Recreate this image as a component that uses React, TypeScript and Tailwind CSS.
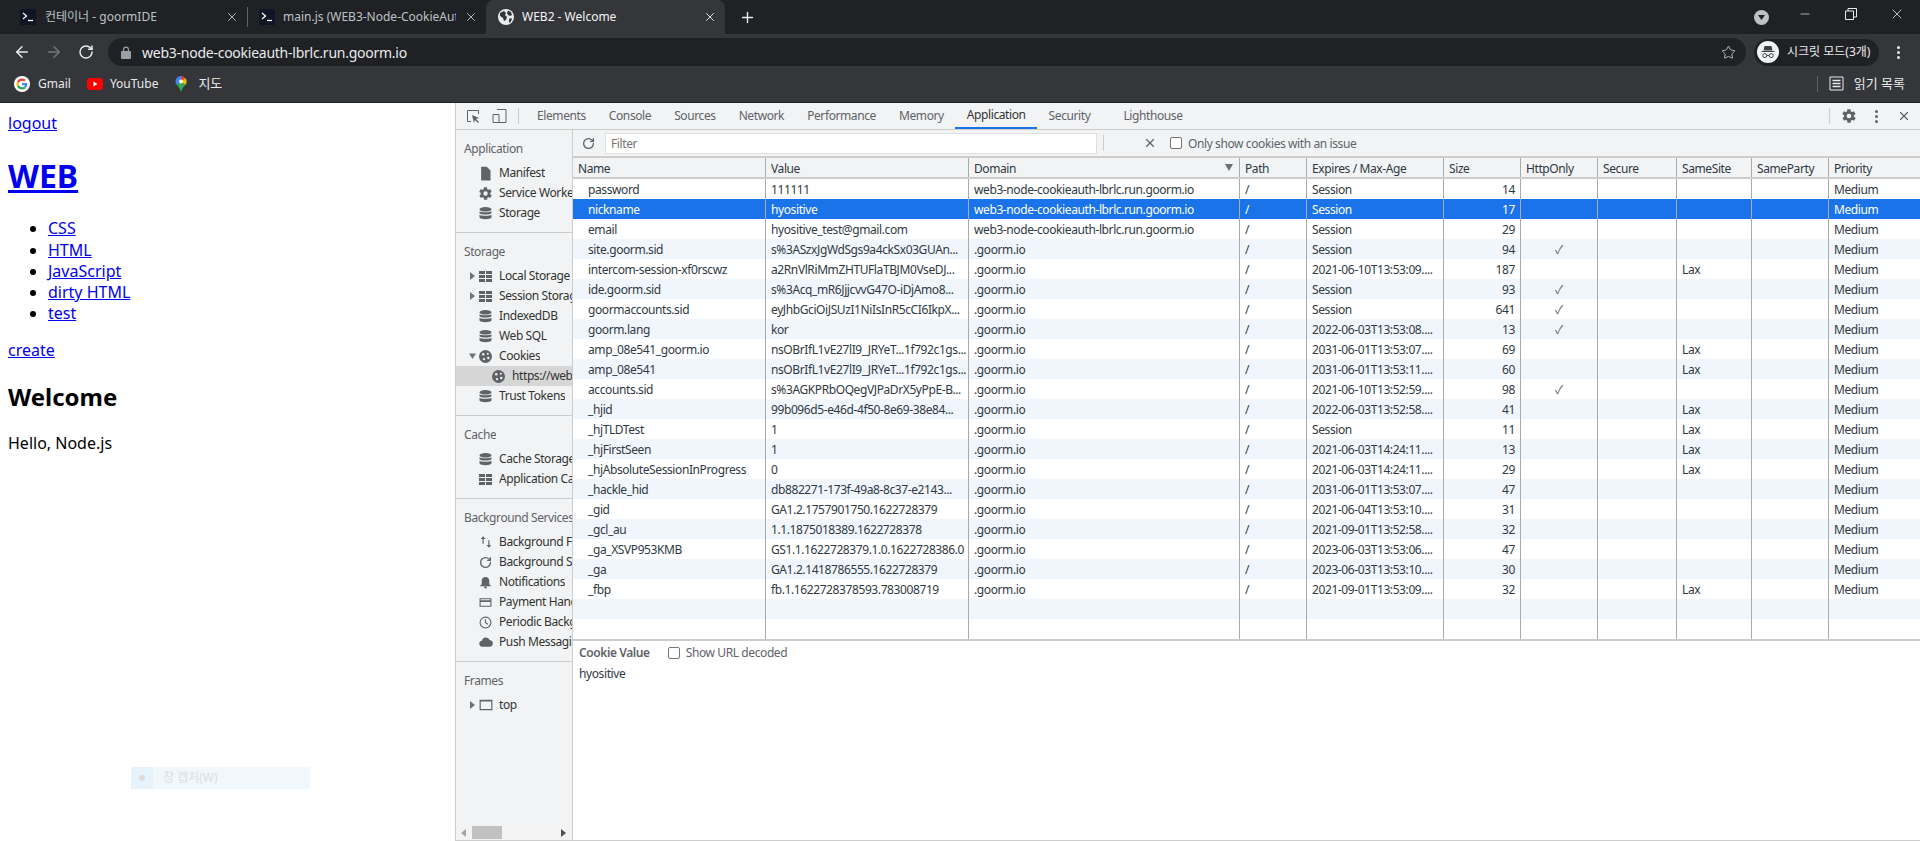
import { ArrowLeft, ArrowRight, Minus, Plus, RotateCw, Star, X } from 'lucide-react';

const ui = 'font-["Noto_Sans","Noto_Sans_CJK_KR",sans-serif]';

const columns = [
  { label: 'Name', width: 'w-[193px]' },
  { label: 'Value', width: 'w-[203px]' },
  { label: 'Domain', width: 'w-[271px]' },
  { label: 'Path', width: 'w-[67px]' },
  { label: 'Expires / Max-Age', width: 'w-[137px]' },
  { label: 'Size', width: 'w-[77px]' },
  { label: 'HttpOnly', width: 'w-[77px]' },
  { label: 'Secure', width: 'w-[79px]' },
  { label: 'SameSite', width: 'w-[75px]' },
  { label: 'SameParty', width: 'w-[77px]' },
  { label: 'Priority', width: 'flex-1' },
];

const hostDomain = 'web3-node-cookieauth-lbrlc.run.goorm.io';

const cookies = [
  ['password', '111111', hostDomain, 'Session', '14', '', ''],
  ['nickname', 'hyositive', hostDomain, 'Session', '17', '', ''],
  ['email', 'hyositive_test@gmail.com', hostDomain, 'Session', '29', '', ''],
  ['site.goorm.sid', 's%3ASzxJgWdSgs9a4ckSx03GUAn...', '.goorm.io', 'Session', '94', '✓', ''],
  ['intercom-session-xf0rscwz', 'a2RnVlRiMmZHTUFlaTBJM0VseDJ...', '.goorm.io', '2021-06-10T13:53:09....', '187', '', 'Lax'],
  ['ide.goorm.sid', 's%3Acq_mR6JjjcvvG47O-iDjAmo8...', '.goorm.io', 'Session', '93', '✓', ''],
  ['goormaccounts.sid', 'eyJhbGciOiJSUzI1NiIsInR5cCI6IkpX...', '.goorm.io', 'Session', '641', '✓', ''],
  ['goorm.lang', 'kor', '.goorm.io', '2022-06-03T13:53:08....', '13', '✓', ''],
  ['amp_08e541_goorm.io', 'nsOBrIfL1vE27lI9_JRYeT...1f792c1gs...', '.goorm.io', '2031-06-01T13:53:07....', '69', '', 'Lax'],
  ['amp_08e541', 'nsOBrIfL1vE27lI9_JRYeT...1f792c1gs...', '.goorm.io', '2031-06-01T13:53:11....', '60', '', 'Lax'],
  ['accounts.sid', 's%3AGKPRbOQegVJPaDrX5yPpE-B...', '.goorm.io', '2021-06-10T13:52:59....', '98', '✓', ''],
  ['_hjid', '99b096d5-e46d-4f50-8e69-38e84...', '.goorm.io', '2022-06-03T13:52:58....', '41', '', 'Lax'],
  ['_hjTLDTest', '1', '.goorm.io', 'Session', '11', '', 'Lax'],
  ['_hjFirstSeen', '1', '.goorm.io', '2021-06-03T14:24:11....', '13', '', 'Lax'],
  ['_hjAbsoluteSessionInProgress', '0', '.goorm.io', '2021-06-03T14:24:11....', '29', '', 'Lax'],
  ['_hackle_hid', 'db882271-173f-49a8-8c37-e2143...', '.goorm.io', '2031-06-01T13:53:07....', '47', '', ''],
  ['_gid', 'GA1.2.1757901750.1622728379', '.goorm.io', '2021-06-04T13:53:10....', '31', '', ''],
  ['_gcl_au', '1.1.1875018389.1622728378', '.goorm.io', '2021-09-01T13:52:58....', '32', '', ''],
  ['_ga_XSVP953KMB', 'GS1.1.1622728379.1.0.1622728386.0', '.goorm.io', '2023-06-03T13:53:06....', '47', '', ''],
  ['_ga', 'GA1.2.1418786555.1622728379', '.goorm.io', '2023-06-03T13:53:10....', '30', '', ''],
  ['_fbp', 'fb.1.1622728378593.783008719', '.goorm.io', '2021-09-01T13:53:09....', '32', '', 'Lax'],
  ['', '', '', '', '', '', ''],
];

function TerminalIcon() {
  return (
    <svg width="16" height="16" viewBox="0 0 16 16" className="shrink-0">
      <rect width="16" height="16" rx="2" fill="#0f1524" />
      <path d="M3 4l3.500 3L3 10" fill="none" stroke="#fff" strokeWidth="1.3" />
      <path d="M8 11.500h5" stroke="#fff" strokeWidth="1.3" />
    </svg>
  );
}

function GlobeIcon() {
  return (
    <svg width="16" height="16" viewBox="0 0 16 16" className="shrink-0">
      <circle cx="8" cy="8" r="8" fill="#e8eaed" />
      <path d="M2 4l4-2 2 2-1 2 2 2-1 3-2 1-1-3-3-2zM10 1.500l3 1.500 1 3-2 1-2-1-1-2zM11 10l2-1 1 1-2 4-1-1z" fill="#35363a" />
    </svg>
  );
}

function GoogleIcon() {
  return (
    <svg width="16" height="16" viewBox="0 0 16 16" className="shrink-0">
      <circle cx="8" cy="8" r="8" fill="#fff" />
      <g transform="translate(2.500 2.500) scale(0.229)">
        <path fill="#EA4335" d="M24 9.500c3.500 0 6.700 1.300 9.100 3.500l6.800-6.800C35.800 2.400 30.300 0 24 0 14.600 0 6.500 5.400 2.600 13.200l7.900 6.100C12.400 13.600 17.700 9.500 24 9.500z" />
        <path fill="#4285F4" d="M47 24.500c0-1.600-.1-3.100-.4-4.500H24v9h12.900c-.6 3-2.200 5.500-4.800 7.200l7.700 6C44.300 38 47 31.800 47 24.500z" />
        <path fill="#FBBC05" d="M10.500 28.700c-.5-1.500-.8-3-.8-4.700s.3-3.200.8-4.700l-7.900-6.100C.9 16.500 0 20.100 0 24s.9 7.500 2.600 10.800l7.900-6.100z" />
        <path fill="#34A853" d="M24 48c6.500 0 11.900-2.100 15.800-5.800l-7.700-6c-2.100 1.400-4.900 2.300-8.100 2.300-6.300 0-11.600-4.100-13.500-9.800l-7.900 6.100C6.500 42.600 14.600 48 24 48z" />
      </g>
    </svg>
  );
}

function YouTubeIcon() {
  return (
    <svg width="16" height="16" viewBox="0 0 16 16" className="shrink-0">
      <rect y="2" width="16" height="12" rx="3" fill="#f00" />
      <path d="M6.500 5.500v5l4-2.500z" fill="#fff" />
    </svg>
  );
}

function MapsIcon() {
  return (
    <svg width="16" height="16" viewBox="0 0 16 16" className="shrink-0">
      <path d="M8 0a5.500 5.500 0 0 0-4.200 9L8 5.500z" fill="#4285f4" />
      <path d="M8 0c1.700 0 3.200.8 4.200 2L8 5.500z" fill="#ea4335" />
      <path d="M12.200 2A5.500 5.500 0 0 1 12.300 9L8 5.500z" fill="#fbbc05" />
      <path d="M3.800 9L8 5.500 12.300 9C10.500 11 8.700 13 8 16c-.7-3-2.400-5-4.200-7z" fill="#34a853" />
      <circle cx="8" cy="5.500" r="2" fill="#fff" />
    </svg>
  );
}

function IncognitoIcon() {
  return (
    <svg width="22" height="22" viewBox="0 0 22 22" className="shrink-0">
      <circle cx="11" cy="11" r="11" fill="#f1f3f4" />
      <path d="M7.500 5h7l1 4.500h-9zM4.500 10h13v1h-13z" fill="#3c4043" />
      <circle cx="7.800" cy="14.600" r="2" fill="none" stroke="#3c4043" />
      <circle cx="14.200" cy="14.600" r="2" fill="none" stroke="#3c4043" />
      <path d="M9.800 14.400h2.400" stroke="#3c4043" />
    </svg>
  );
}

function Tab({ title, active, icon, width, left, gap }: { title: string; active?: boolean; icon: React.ReactNode; width: string; left: string; gap: string }) {
  return (
    <div className={`flex h-[34px] items-center pr-[8px] ${width} ${left} ${gap} ${active ? 'rounded-t-lg bg-[#35363a] text-[#f1f3f4]' : 'text-[#bdc1c6]'}`}>
      {icon}
      <span className="min-w-0 flex-1 overflow-hidden whitespace-nowrap text-[12px]">{title}</span>
      <X size={14} strokeWidth={1.6} className={`shrink-0 ${active ? 'text-[#e8eaed]' : 'text-[#bdc1c6]'}`} />
    </div>
  );
}

function GridIcon() {
  return (
    <svg width="13" height="11" viewBox="0 0 13 11" className="shrink-0" fill="#5f6368">
      <path d="M0 0h6v3H0zM7 0h6v3H7zM0 4h6v3H0zM7 4h6v3H7zM0 8h6v3H0zM7 8h6v3H7z" />
    </svg>
  );
}

function DbIcon() {
  return (
    <svg width="13" height="13" viewBox="0 0 13 13" className="shrink-0" fill="#5f6368">
      <ellipse cx="6.500" cy="2.300" rx="6" ry="2.300" />
      <path d="M.5 4.200c1 1.500 11 1.500 12 0v2c-1 1.800-11 1.800-12 0zM.5 7.700c1 1.500 11 1.500 12 0v2.800c-1 2.200-11 2.200-12 0z" />
    </svg>
  );
}

function GearIcon({ size = 15 }: { size?: number }) {
  return (
    <svg width={size} height={size} viewBox="0 0 24 24" className="shrink-0" fill="#5f6368">
      <path fillRule="evenodd" d="M19.400 13c.1-.3.100-.7.100-1s0-.7-.1-1l2.100-1.600c.2-.2.2-.4.100-.6l-2-3.500c-.1-.2-.4-.3-.6-.2l-2.500 1c-.5-.4-1.100-.7-1.700-1l-.4-2.600c0-.3-.2-.5-.5-.5h-4c-.3 0-.5.200-.5.500l-.4 2.600c-.6.300-1.200.6-1.700 1l-2.500-1c-.2-.1-.5 0-.6.200l-2 3.500c-.1.200-.1.500.1.600L4.600 11c-.1.300-.1.700-.1 1s0 .7.100 1l-2.100 1.600c-.2.200-.2.400-.1.600l2 3.500c.1.200.4.300.6.200l2.500-1c.5.400 1.100.7 1.700 1l.4 2.600c0 .3.200.5.500.5h4c.3 0 .5-.2.500-.5l.4-2.600c.6-.3 1.200-.6 1.700-1l2.500 1c.2.100.5 0 .6-.2l2-3.500c.1-.2.100-.5-.1-.6zM12 15.500a3.500 3.500 0 1 1 0-7 3.500 3.500 0 0 1 0 7z" />
    </svg>
  );
}

function CookieIcon() {
  return (
    <svg width="13" height="13" viewBox="0 0 13 13" className="shrink-0">
      <circle cx="6.500" cy="6.500" r="6.500" fill="#5f6368" />
      <circle cx="4.200" cy="4.200" r="1.200" fill="#f1f3f4" />
      <circle cx="8.800" cy="3.800" r="1" fill="#f1f3f4" />
      <circle cx="9.300" cy="8" r="1.200" fill="#f1f3f4" />
      <circle cx="5" cy="9.200" r="1.100" fill="#f1f3f4" />
    </svg>
  );
}

function Caret({ open }: { open?: boolean }) {
  return (
    <svg width="7" height="8" viewBox="0 0 7 8" className="shrink-0" fill="#727272">
      {open ? <path d="M0 1.500h7L3.500 7z" /> : <path d="M1 0l5 4-5 4z" />}
    </svg>
  );
}

function SideItem({ icon, label, caret, indent, selected }: { icon: React.ReactNode; label: string; caret?: 'open' | 'closed'; indent?: boolean; selected?: boolean }) {
  return (
    <div className={`flex h-5 items-center overflow-hidden whitespace-nowrap ${selected ? 'bg-[#d6d6d6]' : ''} ${indent ? 'pl-[26px]' : 'pl-[13px]'}`}>
      <span className="flex w-[9px] shrink-0 items-center">{caret && <Caret open={caret === 'open'} />}</span>
      <span className="mr-[6px] flex w-[15px] shrink-0 justify-center">{icon}</span>
      <span className="min-w-0 overflow-hidden">{label}</span>
    </div>
  );
}

function SideGroup({ title, children }: { title: string; children: React.ReactNode }) {
  return (
    <div className="border-b border-[#cdcdcd] pt-[10px] pb-[9px]">
      <div className="mb-[5px] flex h-[18px] items-center overflow-hidden whitespace-nowrap pl-[8px] text-[#5f6368]">
        <span className="min-w-0 overflow-hidden">{title}</span>
      </div>
      {children}
    </div>
  );
}

function SimpleIcon({ d, size = 13 }: { d: string; size?: number }) {
  return (
    <svg width={size} height={size} viewBox="0 0 24 24" className="shrink-0" fill="#5f6368">
      <path d={d} />
    </svg>
  );
}

function Sidebar() {
  return (
    <div className="flex w-[117px] shrink-0 flex-col overflow-hidden border-r border-[#cdcdcd] bg-[#f1f3f4] text-[12px] text-[#333]">
      <SideGroup title="Application">
        <SideItem icon={<SimpleIcon size={15} d="M5 1h9l6 6v16H5z" />} label="Manifest" />
        <SideItem icon={<GearIcon />} label="Service Workers" />
        <SideItem icon={<DbIcon />} label="Storage" />
      </SideGroup>
      <SideGroup title="Storage">
        <SideItem caret="closed" icon={<GridIcon />} label="Local Storage" />
        <SideItem caret="closed" icon={<GridIcon />} label="Session Storage" />
        <SideItem icon={<DbIcon />} label="IndexedDB" />
        <SideItem icon={<DbIcon />} label="Web SQL" />
        <SideItem caret="open" icon={<CookieIcon />} label="Cookies" />
        <SideItem indent selected icon={<CookieIcon />} label="https://web3-node" />
        <SideItem icon={<DbIcon />} label="Trust Tokens" />
      </SideGroup>
      <SideGroup title="Cache">
        <SideItem icon={<DbIcon />} label="Cache Storage" />
        <SideItem icon={<GridIcon />} label="Application Cache" />
      </SideGroup>
      <SideGroup title="Background Services">
        <SideItem icon={<SimpleIcon size={14} d="M7 2l4 5H8v8H6V7H3zM17 22l-4-5h3V9h2v8h3z" />} label="Background Fetch" />
        <SideItem icon={<RotateCw size={13} strokeWidth={2.4} className="text-[#5f6368]" />} label="Background Sync" />
        <SideItem icon={<SimpleIcon d="M12 2c-4 0-7 3-7 7v6l-3 3v1h20v-1l-3-3V9c0-4-3-7-7-7zM9 20a3 3 0 0 0 6 0z" />} label="Notifications" />
        <SideItem icon={<SimpleIcon d="M1 4h22v16H1zM3 6v2h18V6zM3 11v7h18v-7z" />} label="Payment Handler" />
        <SideItem icon={<SimpleIcon d="M12 1a11 11 0 1 0 0 22 11 11 0 0 0 0-22zm0 2a9 9 0 1 1 0 18 9 9 0 0 1 0-18zm-1 3v7l5 3 1-1.500-4-2.500V6z" />} label="Periodic Background" />
        <SideItem icon={<SimpleIcon size={14} d="M6 20a5 5 0 0 1-1-10 7 7 0 0 1 13.500-1A5.500 5.500 0 0 1 18 20z" />} label="Push Messaging" />
      </SideGroup>
      <div className="flex flex-1 flex-col pt-[10px]">
        <div className="mb-[5px] flex h-[18px] items-center pl-[8px] text-[#5f6368]">Frames</div>
        <SideItem caret="closed" icon={<SimpleIcon size={14} d="M1 3h22v18H1zM3 6v13h18V6z" />} label="top" />
        <div className="flex-1" />
        <div className="flex h-[15px] items-center gap-[6px] bg-[#f3f3f3] pl-[5px]">
          <svg width="5" height="8" viewBox="0 0 5 8" fill="#a3a3a3"><path d="M5 0v8L0 4z" /></svg>
          <div className="h-[13px] w-[30px] bg-[#c1c1c1]" />
          <div className="flex-1" />
          <svg width="5" height="8" viewBox="0 0 5 8" fill="#505050" className="mr-[6px]"><path d="M0 0v8l5-4z" /></svg>
        </div>
      </div>
    </div>
  );
}

function Cell({ width, pad = 'pl-[5px]', children }: { width: string; pad?: string; children?: React.ReactNode }) {
  return (
    <div className={`flex items-center overflow-hidden whitespace-nowrap border-r border-[#aaa] pt-px ${width} ${pad}`}>
      {children}
    </div>
  );
}

function CookieTable() {
  return (
    <div className="flex h-[485px] flex-col overflow-hidden border-y-2 border-[#cdcdcd] text-[12px] text-[#303942]">
      <div className="flex h-[21px] shrink-0 border-b-2 border-[#cdcdcd] bg-[#f1f3f4] text-[#303942]">
        {columns.map((col) => (
          <div key={col.label} className={`relative flex items-center border-r border-[#aaa] pl-[5px] pt-[2px] last:border-r-0 ${col.width}`}>
            {col.label}
            {col.label === 'Domain' && (
              <svg width="8" height="7" viewBox="0 0 8 7" fill="#6e6e6e" className="absolute right-[6px] top-[6px]"><path d="M0 0h8L4 7z" /></svg>
            )}
          </div>
        ))}
      </div>
      <div className="relative flex-1">
        {cookies.map((c, i) => {
          const selected = i === 1;
          const rowBg = selected ? 'bg-[#1a73e8] text-white' : i % 2 === 1 ? 'bg-[#f1f6fd]' : 'bg-white';
          return (
            <div key={i} className={`flex h-5 ${rowBg}`}>
              <Cell width="w-[193px]" pad="pl-[15px]">{c[0]}</Cell>
              <Cell width="w-[203px]">{c[1]}</Cell>
              <Cell width="w-[271px]">{c[2]}</Cell>
              <Cell width="w-[67px]">{c[0] ? '/' : ''}</Cell>
              <Cell width="w-[137px]">{c[3]}</Cell>
              <Cell width="w-[77px]" pad="justify-end pr-[5px]">{c[4]}</Cell>
              <Cell width="w-[77px]" pad="justify-center text-[#666]">{c[5]}</Cell>
              <Cell width="w-[79px]" />
              <Cell width="w-[75px]">{c[6]}</Cell>
              <Cell width="w-[77px]" />
              <div className="flex flex-1 items-center pl-[5px] pt-px">{c[0] ? 'Medium' : ''}</div>
            </div>
          );
        })}
        <div className="flex h-full">
          {columns.slice(0, -1).map((col) => (
            <div key={col.label} className={`border-r border-[#aaa] ${col.width}`} />
          ))}
        </div>
      </div>
    </div>
  );
}

function DevTools() {
  const tabs = ['Elements', 'Console', 'Sources', 'Network', 'Performance', 'Memory', 'Application', 'Security', 'Lighthouse'];
  return (
    <div className={`flex min-w-0 flex-1 flex-col border-b border-l border-[#cdcdcd] tracking-[-0.4px] ${ui}`}>
      <div className="flex h-[27px] shrink-0 items-center border-b border-[#cdcdcd] bg-[#f1f3f4] text-[12px] text-[#5f6368]">
        <svg width="14" height="14" viewBox="0 0 14 14" className="ml-[10px]" fill="none" stroke="#5f6368">
          <path d="M5 12.500H1.500v-11h11V5" />
          <path d="M6 6l7 3-3 1 3 3-1 1-3-3-1 3z" fill="#5f6368" stroke="none" />
        </svg>
        <svg width="15" height="16" viewBox="0 0 15 16" className="ml-[12px]" fill="none" stroke="#5f6368">
          <path d="M5 1.500h9v13H5M1 6.500h6v8H1z" />
        </svg>
        <div className="ml-[11px] h-4 w-px bg-[#cdcdcd]" />
        <div className="flex h-full items-center pl-[6.500px]">
          {tabs.map((t) => (
            <div key={t} className={`flex h-full items-center px-[11.500px] ${t === 'Application' ? 'border-b-2 border-[#1a73e8] text-[#333]' : ''} ${t === 'Lighthouse' ? 'ml-[10px]' : ''}`}>
              {t}
            </div>
          ))}
        </div>
        <div className="flex-1" />
        <div className="h-4 w-px bg-[#cdcdcd]" />
        <div className="ml-[11px]"><GearIcon size={16} /></div>
        <div className="ml-[18px] flex flex-col gap-[2px]">
          <span className="size-[3px] rounded-full bg-[#5f6368]" />
          <span className="size-[3px] rounded-full bg-[#5f6368]" />
          <span className="size-[3px] rounded-full bg-[#5f6368]" />
        </div>
        <X size={14} className="ml-[19px] mr-[9px] text-[#5f6368]" />
      </div>
      <div className="flex min-h-0 flex-1">
        <Sidebar />
        <div className="flex min-w-0 flex-1 flex-col bg-white">
          <div className="flex h-[26px] shrink-0 items-center bg-[#f1f3f4] text-[12px] text-[#5f6368]">
            <RotateCw size={13} strokeWidth={2.4} className="ml-[9px] text-[#5f6368]" />
            <div className="ml-[10px] flex h-[21px] w-[492px] items-center border border-[#e0e0e0] bg-white pl-[5px] pt-px text-[#757575]">Filter</div>
            <div className="ml-[6px] h-4 w-px bg-[#cdcdcd]" />
            <X size={14} className="ml-[39px] text-[#5f6368]" />
            <span className="ml-[13px] size-[12px] rounded-[2px] border border-[#767676] bg-white" />
            <span className="ml-[6px] pt-px">Only show cookies with an issue</span>
          </div>
          <CookieTable />
          <div className="flex h-[24px] shrink-0 items-center pl-[6px] text-[12px]">
            <span className="font-semibold text-[#5f6368]">Cookie Value</span>
            <span className="ml-[18px] size-[12px] rounded-[2px] border border-[#767676] bg-white" />
            <span className="ml-[6px] text-[#5f6368]">Show URL decoded</span>
          </div>
          <div className="pl-[6px] text-[12px] text-[#303942]">hyositive</div>
        </div>
      </div>
    </div>
  );
}

function PageContent() {
  const link = 'text-[#0000ee] underline';
  return (
    <div className={`relative w-[455px] shrink-0 bg-white px-2 pt-[10px] text-[16px] leading-[21.25px] text-black ${ui}`}>
      <a className={link}>logout</a>
      <h1 className="mt-[20px] text-[32px] font-bold leading-[43px]"><a className={link}>WEB</a></h1>
      <ul className="mt-[21px] list-disc pl-10">
        {['CSS', 'HTML', 'JavaScript', 'dirty HTML', 'test'].map((t) => (
          <li key={t}><a className={link}>{t}</a></li>
        ))}
      </ul>
      <p className="mt-[15px]"><a className={link}>create</a></p>
      <h2 className="mt-[20px] text-[24px] font-bold leading-[32px]">Welcome</h2>
      <p className="mt-[20px]">Hello, Node.js</p>
      {/* faded capture menu left over in the screenshot */}
      <div className="absolute left-[131px] top-[664px] flex h-[22px] w-[179px] items-center bg-[#f0f7fd] text-[12px] text-[#dedede]">
        <span className="flex h-full w-[22px] items-center justify-center bg-[#e6f2fc]">
          <span className="size-[6px] rounded-full bg-[#dcdcdc]" />
        </span>
        <span className="ml-[10px]">창 캡처(W)</span>
      </div>
    </div>
  );
}

export default function App() {
  return (
    <div className={`flex h-[841px] w-[1920px] flex-col overflow-hidden bg-white ${ui}`}>
      <div className="flex h-[34px] shrink-0 items-center bg-[#202124]">
        <div className="w-[8px]" />
        <Tab width="w-[239px]" left="pl-[12px]" gap="gap-[9px]" title="컨테이너 - goormIDE" icon={<TerminalIcon />} />
        <div className="h-5 w-px bg-[#5f6368]" />
        <Tab width="w-[238px]" left="pl-[11px]" gap="gap-[8px]" title="main.js (WEB3-Node-CookieAuth" icon={<TerminalIcon />} />
        <Tab active width="w-[239px]" left="pl-[12px]" gap="gap-[8px]" title="WEB2 - Welcome" icon={<GlobeIcon />} />
        <Plus size={17} className="ml-[14px] text-[#e8eaed]" />
        <div className="flex-1" />
        <span className="mr-[29px] flex size-[15px] items-center justify-center rounded-full bg-[#bdc1c6]">
          <svg width="7" height="5" viewBox="0 0 7 5" fill="#202124"><path d="M0 0h7L3.500 5z" /></svg>
        </span>
        <Minus size={14} strokeWidth={1.2} className="mb-[6px] text-[#e8eaed]" />
        <svg width="12" height="12" viewBox="0 0 12 12" fill="none" stroke="#e8eaed" className="mb-[6px] ml-[33px]">
          <path d="M.5 3h8v8.500H.5zM3 3V.5h8.500V9H9" />
        </svg>
        <X size={16} strokeWidth={1.2} className="mb-[6px] ml-[32px] mr-[15px] text-[#e8eaed]" />
      </div>
      <div className="flex h-[36px] shrink-0 items-center bg-[#35363a]">
        <ArrowLeft size={18} strokeWidth={2} className="ml-[13px] text-[#e8eaed]" />
        <ArrowRight size={18} strokeWidth={2} className="ml-[14px] text-[#74777b]" />
        <RotateCw size={16} strokeWidth={2.2} className="ml-[15px] text-[#e8eaed]" />
        <div className="ml-[14px] flex h-[28px] min-w-0 flex-1 items-center rounded-full bg-[#202124] pl-[13px] pr-[10px]">
          <svg width="10" height="13" viewBox="0 0 10 13" fill="#9aa0a6">
            <path d="M1 5h1V3.500a3 3 0 0 1 6 0V5h1a1 1 0 0 1 1 1v6a1 1 0 0 1-1 1H1a1 1 0 0 1-1-1V6a1 1 0 0 1 1-1zm2.200 0h3.600V3.500a1.800 1.800 0 0 0-3.600 0z" />
          </svg>
          <span className="ml-[11px] flex-1 text-[14px] tracking-[-0.25px] text-[#e8eaed]">web3-node-cookieauth-lbrlc.run.goorm.io</span>
          <Star size={15} strokeWidth={1.5} className="text-[#bdc1c6]" />
        </div>
        <div className="ml-[8px] flex h-[27px] w-[125px] shrink-0 items-center rounded-full bg-[#202124] pl-[3px] text-[12px] text-[#e8eaed]">
          <IncognitoIcon />
          <span className="ml-[8px] whitespace-nowrap">시크릿 모드(3개)</span>
        </div>
        <div className="ml-[18px] mr-[20px] flex flex-col gap-[2px]">
          <span className="size-[3px] rounded-full bg-[#e8eaed]" />
          <span className="size-[3px] rounded-full bg-[#e8eaed]" />
          <span className="size-[3px] rounded-full bg-[#e8eaed]" />
        </div>
      </div>
      <div className="flex h-[33px] shrink-0 items-center border-b border-[#202124] bg-[#35363a] pb-[5px] text-[12px] text-[#e8eaed]">
        <div className="ml-[14px]"><GoogleIcon /></div>
        <span className="ml-[8px]">Gmail</span>
        <div className="ml-[16px]"><YouTubeIcon /></div>
        <span className="ml-[7px]">YouTube</span>
        <div className="ml-[15px]"><MapsIcon /></div>
        <span className="ml-[9px] text-[13px]">지도</span>
        <div className="flex-1" />
        <div className="h-4 w-px bg-[#5f6368]" />
        <svg width="15" height="15" viewBox="0 0 15 15" className="ml-[11px]" fill="none" stroke="#e8eaed">
          <path d="M1 1h13v13H1z" />
          <path d="M3.500 4.500h8M3.500 7.500h8M3.500 10.500h8" strokeWidth="1.600" />
        </svg>
        <span className="ml-[10px] mr-[15px] text-[13px]">읽기 목록</span>
      </div>
      <div className="flex min-h-0 flex-1">
        <PageContent />
        <DevTools />
      </div>
    </div>
  );
}
